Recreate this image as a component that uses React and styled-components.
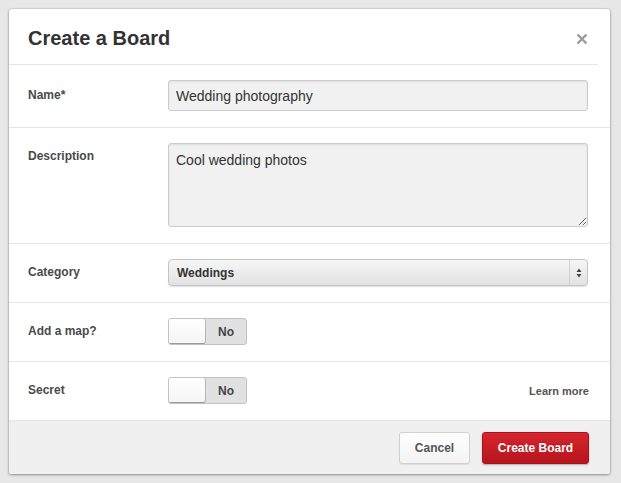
import React from "react";
import styled, { createGlobalStyle } from "styled-components";

const GlobalStyle = createGlobalStyle`
    html, body {
        margin: 0;
        padding: 0;
        background: #e7e7e7;
        font-family: "Liberation Sans", Arial, sans-serif;
    }
`

const Page = styled.div`
    padding: 9px 11px 10px 9px;
    min-height: 483px;
    box-sizing: border-box;
`

const Modal = styled.div`
    width: 601px;
    background: #fff;
    border-radius: 3px;
    box-shadow: 0 1px 3px rgba(0, 0, 0, 0.35), 0 0 0 1px rgba(0, 0, 0, 0.06);
    overflow: hidden;
`

const Header = styled.div`
    display: flex;
    align-items: center;
    justify-content: space-between;
    height: 55px;
    padding: 0 10px 0 19px;
    margin-right: 12px;
    border-bottom: 1px solid #e6e6e6;
`

const Title = styled.h1`
    margin: 0;
    font-size: 20px;
    font-weight: bold;
    color: #333;
    padding-top: 4px;
`

const Close = styled.button`
    border: 0;
    background: none;
    padding: 0;
    margin-top: 4px;
    cursor: pointer;
    display: flex;
`

const Row = styled.div`
    display: flex;
    align-items: ${p => (p.top ? "flex-start" : "center")};
    padding: 15px 22px 16px 19px;
    border-bottom: 1px solid #e6e6e6;
`

const Label = styled.label`
    width: 140px;
    flex-shrink: 0;
    font-size: 12px;
    font-weight: bold;
    color: #4a4a4a;
    line-height: 14px;
    padding-top: ${p => (p.top ? "6px" : "0")};
    margin-top: ${p => (p.top ? "0" : "-2px")};
`

const Field = styled.div`
    flex: 1;
    display: flex;
    align-items: center;
    justify-content: space-between;
`

const TextInput = styled.input`
    width: 100%;
    height: 31px;
    box-sizing: border-box;
    border: 1px solid #ccc;
    border-radius: 3px;
    background: #f1f1f1;
    box-shadow: inset 0 1px 2px rgba(0, 0, 0, 0.08);
    padding: 0 7px;
    font-family: inherit;
    font-size: 14px;
    color: #333;
    outline: none;
`

const TextArea = styled.textarea`
    width: 100%;
    height: 84px;
    box-sizing: border-box;
    border: 1px solid #ccc;
    border-radius: 3px;
    background: #f1f1f1;
    box-shadow: inset 0 1px 2px rgba(0, 0, 0, 0.08);
    padding: 8px 7px;
    font-family: inherit;
    font-size: 14px;
    color: #333;
    outline: none;
    display: block;
`

const Select = styled.div`
    width: 100%;
    height: 27px;
    box-sizing: border-box;
    display: flex;
    align-items: center;
    border: 1px solid #c4c4c4;
    border-radius: 4px;
    background: linear-gradient(#f6f6f6, #e2e2e2);
    box-shadow: 0 1px 1px rgba(0, 0, 0, 0.12);
`

const SelectText = styled.span`
    flex: 1;
    padding-left: 8px;
    font-size: 12px;
    font-weight: bold;
    color: #333;
`

const SelectArrows = styled.span`
    width: 17px;
    height: 100%;
    border-left: 1px solid #d2d2d2;
    display: flex;
    align-items: center;
    justify-content: center;
`

const Toggle = styled.div`
    width: 79px;
    height: 27px;
    box-sizing: border-box;
    display: flex;
    border: 1px solid #c2c2c2;
    border-radius: 3px;
    background: #e1e1e1;
    overflow: hidden;
`

const Knob = styled.span`
    width: 37px;
    height: 100%;
    box-sizing: border-box;
    background: linear-gradient(#fff, #f5f5f5);
    border-right: 1px solid #b5b5b5;
    border-bottom: 1px solid #9a9a9a;
    border-radius: 0 3px 3px 0;
`

const ToggleText = styled.span`
    flex: 1;
    display: flex;
    align-items: center;
    justify-content: center;
    font-size: 12px;
    font-weight: bold;
    color: #444;
`

const LearnMore = styled.a`
    font-size: 11px;
    font-weight: bold;
    color: #555;
    text-decoration: none;
    margin-right: -1px;
`

const Footer = styled.div`
    display: flex;
    justify-content: flex-end;
    gap: 12px;
    padding: 11px 21px 10px;
    background: #f0f0f0;
`

const Button = styled.button`
    height: 32px;
    width: ${p => p.w}px;
    border-radius: 3px;
    font-family: inherit;
    font-size: 12px;
    font-weight: bold;
    cursor: pointer;
    border: 1px solid ${p => (p.primary ? "#a8131b" : "#d0d0d0")};
    color: ${p => (p.primary ? "#fff" : "#555")};
    background: ${p =>
        p.primary ? "linear-gradient(#d8262f, #b5141c)" : "linear-gradient(#fff, #f3f3f3)"};
    box-shadow: ${p =>
        p.primary ? "0 1px 2px rgba(0, 0, 0, 0.3)" : "0 1px 1px rgba(0, 0, 0, 0.08)"};
    text-shadow: ${p => (p.primary ? "0 -1px 0 rgba(0, 0, 0, 0.2)" : "none")};
`

const CloseIcon = () => (
    <svg width="12" height="12" viewBox="0 0 12 12">
        <path d="M1.5 1.5 L10.5 10.5 M10.5 1.5 L1.5 10.5" stroke="#9a9a9a" strokeWidth="2.4" />
    </svg>
)

const ArrowsIcon = () => (
    <svg width="6" height="10" viewBox="0 0 6 10">
        <path d="M3 0.5 L5.5 4 L0.5 4 Z" fill="#444" />
        <path d="M3 9.5 L5.5 6 L0.5 6 Z" fill="#444" />
    </svg>
)

const Switch = ({ label }) => (
    <Toggle>
        <Knob />
        <ToggleText>{label}</ToggleText>
    </Toggle>
)

export default function App() {
    return (
        <Page>
            <GlobalStyle />
            <Modal>
                <Header>
                    <Title>Create a Board</Title>
                    <Close aria-label="Close"><CloseIcon /></Close>
                </Header>
                <Row>
                    <Label>Name*</Label>
                    <Field>
                        <TextInput readOnly value="Wedding photography" />
                    </Field>
                </Row>
                <Row top>
                    <Label top>Description</Label>
                    <Field>
                        <TextArea readOnly value="Cool wedding photos" />
                    </Field>
                </Row>
                <Row>
                    <Label>Category</Label>
                    <Field>
                        <Select>
                            <SelectText>Weddings</SelectText>
                            <SelectArrows><ArrowsIcon /></SelectArrows>
                        </Select>
                    </Field>
                </Row>
                <Row>
                    <Label>Add a map?</Label>
                    <Field>
                        <Switch label="No" />
                    </Field>
                </Row>
                <Row>
                    <Label>Secret</Label>
                    <Field>
                        <Switch label="No" />
                        <LearnMore href="#">Learn more</LearnMore>
                    </Field>
                </Row>
                <Footer>
                    <Button w={71}>Cancel</Button>
                    <Button primary w={107}>Create Board</Button>
                </Footer>
            </Modal>
        </Page>
    )
}
